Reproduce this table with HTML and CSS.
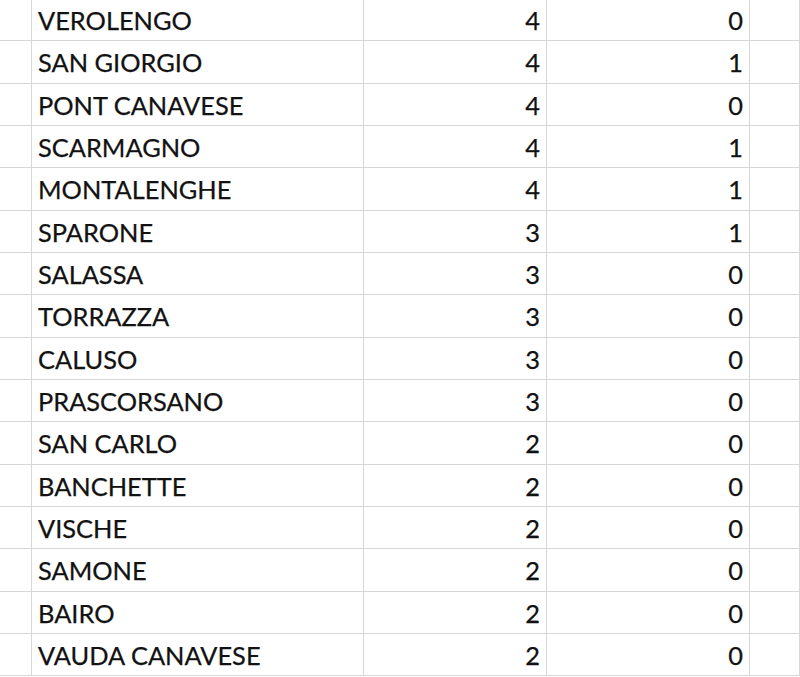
FILE: index.html
```html
<!DOCTYPE html>
<html>
<head>
<meta charset="utf-8">
<link rel="stylesheet" href="styles.css">
</head>
<body>
<div class="sheet">
  <div class="row"><div class="c0"></div><div class="name">VEROLENGO</div><div class="num">4</div><div class="num">0</div><div class="c4"></div></div>
  <div class="row"><div class="c0"></div><div class="name">SAN GIORGIO</div><div class="num">4</div><div class="num">1</div><div class="c4"></div></div>
  <div class="row"><div class="c0"></div><div class="name">PONT CANAVESE</div><div class="num">4</div><div class="num">0</div><div class="c4"></div></div>
  <div class="row"><div class="c0"></div><div class="name">SCARMAGNO</div><div class="num">4</div><div class="num">1</div><div class="c4"></div></div>
  <div class="row"><div class="c0"></div><div class="name">MONTALENGHE</div><div class="num">4</div><div class="num">1</div><div class="c4"></div></div>
  <div class="row"><div class="c0"></div><div class="name">SPARONE</div><div class="num">3</div><div class="num">1</div><div class="c4"></div></div>
  <div class="row"><div class="c0"></div><div class="name">SALASSA</div><div class="num">3</div><div class="num">0</div><div class="c4"></div></div>
  <div class="row"><div class="c0"></div><div class="name">TORRAZZA</div><div class="num">3</div><div class="num">0</div><div class="c4"></div></div>
  <div class="row"><div class="c0"></div><div class="name">CALUSO</div><div class="num">3</div><div class="num">0</div><div class="c4"></div></div>
  <div class="row"><div class="c0"></div><div class="name">PRASCORSANO</div><div class="num">3</div><div class="num">0</div><div class="c4"></div></div>
  <div class="row"><div class="c0"></div><div class="name">SAN CARLO</div><div class="num">2</div><div class="num">0</div><div class="c4"></div></div>
  <div class="row"><div class="c0"></div><div class="name">BANCHETTE</div><div class="num">2</div><div class="num">0</div><div class="c4"></div></div>
  <div class="row"><div class="c0"></div><div class="name">VISCHE</div><div class="num">2</div><div class="num">0</div><div class="c4"></div></div>
  <div class="row"><div class="c0"></div><div class="name">SAMONE</div><div class="num">2</div><div class="num">0</div><div class="c4"></div></div>
  <div class="row"><div class="c0"></div><div class="name">BAIRO</div><div class="num">2</div><div class="num">0</div><div class="c4"></div></div>
  <div class="row"><div class="c0"></div><div class="name">VAUDA CANAVESE</div><div class="num">2</div><div class="num">0</div><div class="c4"></div></div>
</div>
</body>
</html>
```

FILE: styles.css
```css
html, body {
  margin: 0;
  padding: 0;
  background: #ffffff;
  overflow: hidden;
}
.sheet {
  margin-top: -1px;
  font-family: Lato, "Liberation Sans", sans-serif;
  font-size: 25.4px;
  color: #121212;
  -webkit-text-stroke: 0.25px #121212;
}
.row {
  display: grid;
  grid-template-columns: 32px 332px 183px 203px 50px;
  height: 42.33px;
}
.row > div {
  border-right: 1px solid #d6d6d6;
  border-bottom: 1px solid #d6d6d6;
  display: flex;
  align-items: flex-end;
  padding-bottom: 7px;
  box-sizing: border-box;
  line-height: 1;
}
.name {
  padding-left: 6px;
}
.num {
  justify-content: flex-end;
  padding-right: 6px;
}
```
